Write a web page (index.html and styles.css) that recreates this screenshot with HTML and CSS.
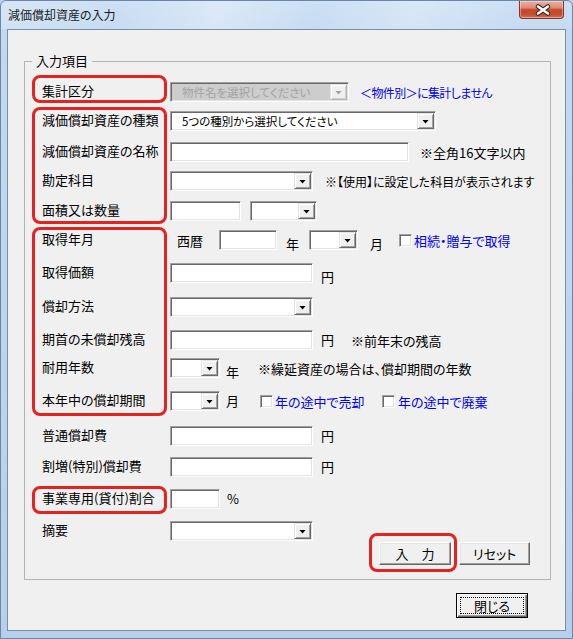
FILE: index.html
```html
<!DOCTYPE html>
<html lang="ja">
<head>
<meta charset="utf-8">
<title>減価償却資産の入力</title>
<link rel="stylesheet" href="styles.css">
</head>
<body>
<div class="window">
  <div class="titlebar">
    <span class="title">減価償却資産の入力</span>
    <div class="close-btn">
      <svg class="close-x" viewBox="0 0 43 18" width="43" height="18">
        <path d="M18 5.5 L28 12.5 M28 5.5 L18 12.5" stroke="#3e302d" stroke-width="4.6" stroke-linecap="round" fill="none"/>
        <path d="M18 5.5 L28 12.5 M28 5.5 L18 12.5" stroke="#ffffff" stroke-width="2.4" stroke-linecap="round" fill="none"/>
      </svg>
    </div>
  </div>
  <div class="client">
    <fieldset class="group">
      <legend>入力項目</legend>
      <div class="form">
        <div class="mark mark-1"></div>
        <div class="mark mark-2"></div>
        <div class="mark mark-3"></div>
        <div class="mark mark-4"></div>

        <div class="lbl r1">集計区分</div>
        <div class="ctl r1">
          <div class="combo dis w179"><span class="val">物件名を選択してください</span><span class="arrow"></span></div>
          <span class="link tight ml11">＜物件別＞に集計しません</span>
        </div>

        <div class="lbl r2">減価償却資産の種類</div>
        <div class="ctl r2">
          <div class="combo w266"><span class="val">5つの種別から選択してください</span><span class="arrow"></span></div>
        </div>

        <div class="lbl r3">減価償却資産の名称</div>
        <div class="ctl r3">
          <input class="field w239" type="text">
          <span class="note ml11">※全角16文字以内</span>
        </div>

        <div class="lbl r4">勘定科目</div>
        <div class="ctl r4">
          <div class="combo w143"><span class="val"></span><span class="arrow"></span></div>
          <span class="note small ml12">※【使用】に設定した科目が表示されます</span>
        </div>

        <div class="lbl r5">面積又は数量</div>
        <div class="ctl r5">
          <input class="field w71" type="text">
          <div class="combo w67 ml9"><span class="val"></span><span class="arrow"></span></div>
        </div>

        <div class="lbl r6">取得年月</div>
        <div class="ctl r6">
          <span class="ml7">西暦</span>
          <input class="field w58 ml16" type="text">
          <span class="unit low ml9">年</span>
          <div class="combo w49 ml10"><span class="val"></span><span class="arrow"></span></div>
          <span class="unit low ml12">月</span>
          <span class="chk ml16"></span>
          <span class="link ml2">相続・贈与で取得</span>
        </div>

        <div class="lbl r7">取得価額</div>
        <div class="ctl r7">
          <input class="field w143" type="text">
          <span class="unit low ml8">円</span>
        </div>

        <div class="lbl r8">償却方法</div>
        <div class="ctl r8">
          <div class="combo w143"><span class="val"></span><span class="arrow"></span></div>
        </div>

        <div class="lbl r9">期首の未償却残高</div>
        <div class="ctl r9">
          <input class="field w143" type="text">
          <span class="unit ml8">円</span>
          <span class="note ml17">※前年末の残高</span>
        </div>

        <div class="lbl r10">耐用年数</div>
        <div class="ctl r10">
          <div class="combo w50"><span class="val"></span><span class="arrow"></span></div>
          <span class="unit low ml6">年</span>
          <span class="note ml19">※繰延資産の場合は、償却期間の年数</span>
        </div>

        <div class="lbl r11">本年中の償却期間</div>
        <div class="ctl r11">
          <div class="combo w50"><span class="val"></span><span class="arrow"></span></div>
          <span class="unit ml6">月</span>
          <div class="chk-item first ml21"><span class="chk"></span><span class="link ml2">年の途中で売却</span></div>
          <div class="chk-item"><span class="chk"></span><span class="link ml3">年の途中で廃棄</span></div>
        </div>

        <div class="lbl r12">普通償却費</div>
        <div class="ctl r12">
          <input class="field w143" type="text">
          <span class="unit ml8">円</span>
        </div>

        <div class="lbl r13">割増(特別)償却費</div>
        <div class="ctl r13">
          <input class="field w143" type="text">
          <span class="unit ml8">円</span>
        </div>

        <div class="lbl r14">事業専用(貸付)割合</div>
        <div class="ctl r14">
          <input class="field w50" type="text">
          <span class="unit ml7">%</span>
        </div>

        <div class="lbl r15">摘要</div>
        <div class="ctl r15">
          <div class="combo w143"><span class="val"></span><span class="arrow"></span></div>
        </div>
      </div>
      <div class="btn-row">
        <div class="mark-btn"><button class="btn" type="button">入　力</button></div>
        <button class="btn btn-reset" type="button">リセット</button>
      </div>
    </fieldset>
    <div class="footer">
      <button class="btn btn-default" type="button"><span class="focus">閉じる</span></button>
    </div>
  </div>
</div>
</body>
</html>
```

FILE: styles.css
```css
* { box-sizing: border-box; }
html, body { margin: 0; padding: 0; }
body {
  width: 573px;
  height: 639px;
  overflow: hidden;
  background: #bcd4ee;
  font-family: "Noto Sans CJK JP", "Noto Sans", sans-serif;
  font-size: 13px;
  font-feature-settings: "palt" 1;
  color: #000;
}

/* window frame */
.window {
  width: 573px;
  height: 639px;
  border: 1px solid #6b87a8;
  border-radius: 6px 6px 0 0;
  background: linear-gradient(180deg, #cadef3 0px, #c2d9f1 30px, #bdd5ef 300px, #b7cfeb 639px);
  display: flex;
  flex-direction: column;
}
.titlebar {
  height: 28px;
  flex: none;
  display: flex;
  align-items: flex-start;
  justify-content: space-between;
  border-radius: 5px 5px 0 0;
  background: linear-gradient(105deg, rgba(255,255,255,0.25) 0%, rgba(255,255,255,0.05) 20%, rgba(255,255,255,0.35) 38%, rgba(255,255,255,0.05) 55%, rgba(255,255,255,0.3) 72%, rgba(255,255,255,0.05) 90%);
}
.title {
  padding-left: 7px;
  line-height: 28px;
  font-size: 12px;
  color: #1a1a1a;
}
.close-btn {
  width: 45px;
  height: 18px;
  margin-right: 8px;
  border: 1px solid #80392c;
  border-top: none;
  border-radius: 0 0 4px 4px;
  background: linear-gradient(180deg, #ecb1a3 0%, #de8a76 40%, #c8442a 52%, #c64e31 80%, #d97458 100%);
  box-shadow: inset 0 0 0 1px rgba(255,255,255,0.35);
}
.close-x { display: block; }

.client {
  flex: none;
  height: 602px;
  margin: 0 6px;
  border: 1px solid #7a8ea6;
  background: #f0f0f0;
  display: flex;
  flex-direction: column;
}

/* group box */
.group {
  margin: 23px 14px 0 16px;
  padding: 13px 0 7px 7px;
  border: 1px solid #b4b4b4;
  min-width: 0;
}
.group legend {
  padding: 0 4px;
  line-height: 16px;
  font-size: 13px;
}

/* form grid */
.form {
  display: grid;
  grid-template-columns: 138px 1fr;
  grid-template-rows: 29px 31px 29px 30px 29px 33px 34px 33px 28px 33px 35px 31px 32px 32px 20px;
}
.lbl {
  grid-column: 1;
  align-self: start;
  height: 20px;
  display: flex;
  align-items: center;
  padding-left: 10px;
  padding-bottom: 3px;
  white-space: nowrap;
}
.ctl {
  grid-column: 2;
  align-self: start;
  height: 20px;
  display: flex;
  align-items: center;
  white-space: nowrap;
}
.r1 { grid-row: 1; }
.r2 { grid-row: 2; }
.r3 { grid-row: 3; }
.r4 { grid-row: 4; }
.r5 { grid-row: 5; }
.r6 { grid-row: 6; }
.r7 { grid-row: 7; }
.r8 { grid-row: 8; }
.r9 { grid-row: 9; }
.r10 { grid-row: 10; }
.r11 { grid-row: 11; }
.r12 { grid-row: 12; }
.r13 { grid-row: 13; }
.r14 { grid-row: 14; }
.r15 { grid-row: 15; }

/* red annotation marks */
.mark {
  grid-column: 1;
  align-self: start;
  width: 135px;
  border: 3px solid #e42320;
  border-radius: 8px;
}
.mark-1 { grid-row: 1 / 2; margin-top: -7px; height: 28px; }
.mark-2 { grid-row: 2 / 6; margin-top: -4px; height: 117px; }
.mark-3 { grid-row: 6 / 12; margin-top: -3px; height: 189px; }
.mark-4 { grid-row: 14 / 15; margin-top: -3px; height: 28px; }

/* controls */
.field {
  height: 20px;
  margin: 0;
  padding: 0 3px;
  font: inherit;
  border: 1px solid;
  border-color: #a0a0a0 #ffffff #ffffff #a0a0a0;
  box-shadow: inset 1px 1px 0 #696969, inset -1px -1px 0 #e3e3e3;
  background: #fff;
  outline: none;
}
.combo {
  height: 20px;
  display: flex;
  padding: 1px;
  border: 1px solid;
  border-color: #a0a0a0 #ffffff #ffffff #a0a0a0;
  box-shadow: inset 1px 1px 0 #696969, inset -1px -1px 0 #e3e3e3;
  background: #fff;
}
.combo .val {
  flex: 1;
  min-width: 0;
  padding-left: 10px;
  font-size: 11.5px;
  line-height: 16px;
  overflow: hidden;
}
.combo .arrow {
  flex: none;
  width: 17px;
  height: 16px;
  display: flex;
  align-items: center;
  justify-content: center;
  background: #f0f0f0;
  border: 1px solid;
  border-color: #e3e3e3 #696969 #696969 #e3e3e3;
  box-shadow: inset 1px 1px 0 #fff, inset -1px -1px 0 #a0a0a0;
}
.combo .arrow::after {
  content: "";
  width: 7px;
  height: 4px;
  margin-top: 1px;
  background: #000;
  clip-path: polygon(0 0, 100% 0, 50% 100%);
}
.combo.dis { background: #cdcdcd; }
.combo.dis .val { color: #a3a3a3; }
.combo.dis .arrow { border-color: #e3e3e3 #b5b5b5 #b5b5b5 #e3e3e3; box-shadow: inset 1px 1px 0 #fff, inset -1px -1px 0 #d0d0d0; }
.combo.dis .arrow::after { background: #a0a0a0; }

.chk {
  flex: none;
  width: 13px;
  height: 13px;
  border: 1px solid;
  border-color: #a0a0a0 #ffffff #ffffff #a0a0a0;
  box-shadow: inset 1px 1px 0 #696969, inset -1px -1px 0 #e3e3e3;
  background: #fff;
}
.chk-item { display: flex; align-items: center; }
.chk-item.first { width: 122px; }

.link { color: #0000f0; }
.link.tight { font-size: 12px; letter-spacing: -0.6px; }
.note { color: #000; }
.note.small { font-size: 12px; }
.unit { line-height: 20px; }
.unit.low { margin-top: 7px; }

.w49 { width: 49px; }
.w50 { width: 50px; }
.w58 { width: 58px; }
.w67 { width: 67px; }
.w71 { width: 71px; }
.w143 { width: 143px; }
.w179 { width: 179px; }
.w239 { width: 239px; }
.w266 { width: 266px; }

.ml2 { margin-left: 2px; }
.ml3 { margin-left: 3px; }
.ml6 { margin-left: 6px; }
.ml7 { margin-left: 7px; }
.ml8 { margin-left: 8px; }
.ml9 { margin-left: 9px; }
.ml10 { margin-left: 10px; }
.ml11 { margin-left: 11px; }
.ml12 { margin-left: 12px; }
.ml16 { margin-left: 16px; }
.ml17 { margin-left: 17px; }
.ml19 { margin-left: 19px; }
.ml21 { margin-left: 21px; }

/* buttons */
.btn-row {
  display: flex;
  justify-content: flex-end;
  align-items: flex-start;
  margin-top: -8px;
  padding-right: 20px;
}
.mark-btn {
  border: 3px solid #e42320;
  border-radius: 8px;
  padding: 6px 3px 4px 7px;
}
.btn {
  display: flex;
  align-items: center;
  justify-content: center;
  width: 72px;
  height: 23px;
  margin: 0;
  padding: 0;
  font: inherit;
  color: #000;
  background: #f0f0f0;
  border: 1px solid;
  border-color: #ffffff #696969 #696969 #ffffff;
  box-shadow: inset -1px -1px 0 #a0a0a0, inset 1px 1px 0 #e3e3e3;
}
.btn-reset {
  width: 71px;
  margin-left: 2px;
  margin-top: 9px;
}

.footer {
  display: flex;
  justify-content: flex-end;
  padding-right: 37px;
  margin-top: 13px;
}
.btn-default {
  height: 25px;
  padding: 3px;
  border: 1px solid #000;
  box-shadow: inset 1px 1px 0 #fff, inset -1px -1px 0 #696969, inset -2px -2px 0 #a0a0a0;
  align-items: stretch;
}
.btn-default .focus {
  flex: 1;
  display: flex;
  align-items: center;
  justify-content: center;
  border: 1px dotted #000;
}
```
